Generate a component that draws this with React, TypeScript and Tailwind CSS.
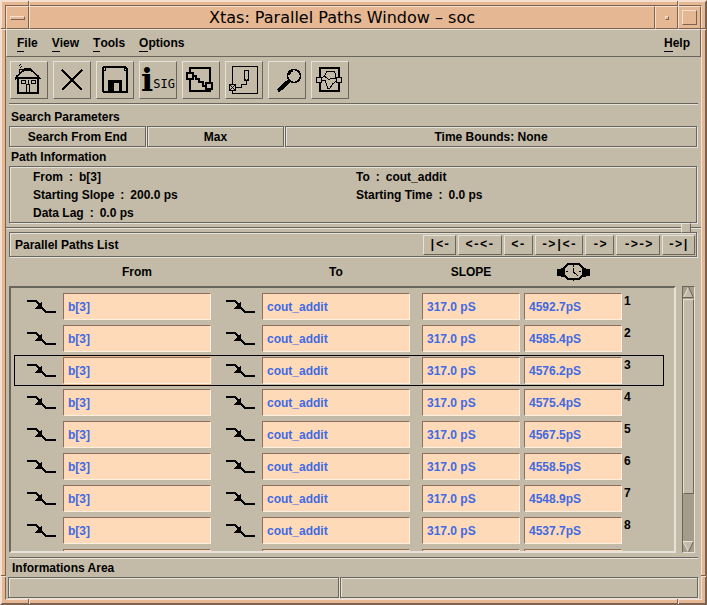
import React from "react";

const FROM = "b[3]";
const TO = "cout_addit";
const DELAYS = ["4592.7pS", "4585.4pS", "4576.2pS", "4575.4pS", "4567.5pS", "4558.5pS", "4548.9pS", "4537.7pS", "4530.1pS"];
const SELECTED = 2;
const NUMBERED_ROWS = 8;

const INFO = [
  ["From", "b[3]"],
  ["To", "cout_addit"],
  ["Starting Slope", "200.0 ps"],
  ["Starting Time", "0.0 ps"],
  ["Data Lag", "0.0 ps"],
];

const ETCHED =
  "border border-[#6b665b] shadow-[1px_1px_0_#e6e2da,inset_1px_1px_0_#e6e2da]";
const RAISED =
  "border border-t-[#e6e2da] border-l-[#e6e2da] border-r-[#6b665b] border-b-[#6b665b]";
const FRAME_CELL =
  "border border-t-[#f5dfd0] border-l-[#f5dfd0] border-r-[#7e6250] border-b-[#7e6250]";
const ROW_GRID = "grid grid-cols-[48px_1fr_51px_1fr_12px_98px_4px_98px_41px]";

function Glyph({ children }: { children: React.ReactNode }) {
  return (
    <svg width="36" height="36" viewBox="0 0 36 36" fill="none" stroke="#000" shapeRendering="crispEdges" aria-hidden="true">
      {children}
    </svg>
  );
}

const TOOLS: { label: string; icon: React.ReactNode }[] = [
  {
    label: "Home",
    icon: (
      <Glyph>
        <path d="M4 17.5 L6 14 L12 9 L14 7 H19 L21 9 L27 14 L29.5 17.5" strokeWidth="1.5" />
        <path d="M13 6.5 h7 v2 h-7z" fill="#000" stroke="none" />
        <path d="M8.5 13 V7.5 H11.5 V10" />
        <path d="M9 5h1v1h-1z M10 4h1v1h-1z M8 3h1v1h-1z M9 2h1v1h-1z" fill="#000" stroke="none" />
        <path d="M5 15.5 H28 M7 16 V31 H27 V16" strokeWidth="2" />
        <path d="M10.5 18.5 h4 v3 h-4z M20.5 18.5 h4 v3 h-4z M15.5 31 V22.5 H18.5 V31" />
        <path d="M17.5 22 v-4" />
      </Glyph>
    ),
  },
  {
    label: "Close",
    icon: (
      <Glyph>
        <path d="M8 8 L28 28 M28 8 L8 28" strokeWidth="2" />
      </Glyph>
    ),
  },
  {
    label: "Save",
    icon: (
      <Glyph>
        <path d="M7 5 H28 L30 7 V30 H7 L6 29 V6z" strokeWidth="2" />
        <path d="M8.5 5 v3 M27.5 5 v3 M7 8.5 h2 M27 8.5 h2" />
        <path d="M11 18 H25 V31 H11z M17 21 V29 H22 V21z" fill="#000" fillRule="evenodd" stroke="none" />
      </Glyph>
    ),
  },
  {
    label: "Signal information",
    icon: (
      <span className="flex h-9 items-end justify-center font-['DejaVu_Serif',serif] text-[32px] leading-[36px] font-bold">
        i<span className="pb-[6px] font-['DejaVu_Sans_Mono',monospace] text-xs leading-[16px] font-normal">SIG</span>
      </span>
    ),
  },
  {
    label: "Path",
    icon: (
      <Glyph>
        <path d="M7 11 V6 H27 V22 M7 17 V29 H27 V27" strokeWidth="2" />
        <path d="M4 11 h6 v6 h-6z M23 21 h6 v6 h-6z" strokeWidth="2" />
        <path d="M10 14 H13 V17 H16 V20 H20 V24 H23" strokeWidth="2" />
      </Glyph>
    ),
  },
  {
    label: "Path end",
    icon: (
      <Glyph>
        <path d="M6.5 22 V4.5 H31.5 V31.5 H6.5 V28" />
        <path d="M3.5 22.5 h6 v6 h-6z M4 23 l5 5 M9 23 l-5 5" />
        <path d="M10 25.5 H15.5 V22.5 H20.5 V18 M18.5 8.5 h4 v10 h-4z M19 17 l1.500 2 l1.500 -2" />
      </Glyph>
    ),
  },
  {
    label: "Search",
    icon: (
      <Glyph>
        <circle cx="25" cy="14" r="6.500" strokeWidth="1.5" />
        <path d="M20.500 13 q0.500 -3 3.500 -4" />
        <path d="M9 29 L20 19" strokeWidth="4" />
      </Glyph>
    ),
  },
  {
    label: "Parallel paths",
    icon: (
      <Glyph>
        <path d="M8 15 V6 H27 V15 M8 20 V29 H27 V20" strokeWidth="2" />
        <path d="M4.500 15.500 h5 v5 h-5z M24.500 15.500 h5 v5 h-5z" />
        <path d="M10 15.500 L12.500 14 L14.500 10 L22 9.500 L24 13 L23.500 16 M10 18.500 L13.500 19 L15.500 26 L18 26 L20.500 22 L24 19.500 M13 14.500 L17 17.500 L21 16 L24 17" />
      </Glyph>
    ),
  },
];

const STEPS = [
  { text: "|<-", width: "w-[33px]" },
  { text: "<-<-", width: "w-[44px]" },
  { text: "<-", width: "w-[29px]" },
  { text: "->|<-", width: "w-[48px]" },
  { text: "->", width: "w-[29px]" },
  { text: "->->", width: "w-[44px]" },
  { text: "->|", width: "w-[33px]" },
];

function FallingEdge() {
  return (
    <svg className="mt-[7px]" width="29" height="14" viewBox="0 0 29 14" fill="none" stroke="#000" shapeRendering="crispEdges" aria-hidden="true">
      <path d="M0 1 H9 L19 12 H29" strokeWidth="2" />
      <path d="M15 1 V9 H8 L10 6z" fill="#000" stroke="none" />
    </svg>
  );
}

function Watch() {
  return (
    <svg width="33" height="18" viewBox="0 0 33 18" fill="none" stroke="#000" shapeRendering="crispEdges" role="img" aria-label="Delay">
      <path d="M0 6 h4 v-1 h3 v9 h-3 v-1 h-4z M33 6 h-4 v-1 h-3 v9 h3 v-1 h4z" fill="#000" stroke="none" />
      <path d="M11 1 H22 L26 5 V12 L22 16 H11 L7 12 V5z" strokeWidth="2" fill="#c3bba8" />
      <path d="M16.500 2 v2 M9 8.500 h2 M22 8.500 h2 M16.500 15 v3 M16.500 5 V9 L21 13" />
    </svg>
  );
}

function MenuItem({ text }: { text: string }) {
  return (
    <button type="button" className="flex text-xs leading-4 font-bold">
      <span className="border-b border-black">{text[0]}</span>
      {text.slice(1)}
    </button>
  );
}

function Field({ value, label, active = false }: { value: string; label: string; active?: boolean }) {
  return (
    <input
      readOnly
      value={value}
      aria-label={label}
      className={`block h-[27px] w-full min-w-0 border border-t-[#8c6f5c] border-r-[#fff0e2] border-b-[#fff0e2] border-l-[#8c6f5c] bg-[#ffdab9] px-1 text-xs font-bold text-[#4169e1] outline-none ${active ? "ring-1 ring-[#e6b793]" : ""}`}
    />
  );
}

function TitleBar() {
  return (
    <header className="flex h-[23px] shrink-0">
      <button type="button" aria-label="Window menu" className={`flex w-[23px] items-center justify-center ${FRAME_CELL}`}>
        <span className={`h-1 w-[15px] ${FRAME_CELL}`} />
      </button>
      <h1 className={`flex flex-1 items-center justify-center font-['DejaVu_Sans',sans-serif] text-base leading-none ${FRAME_CELL}`}>
        Xtas: Parallel Paths Window – soc
      </h1>
      <button type="button" aria-label="Minimize" className={`flex w-[23px] items-center justify-center ${FRAME_CELL}`}>
        <span className={`size-1 ${FRAME_CELL}`} />
      </button>
      <button type="button" aria-label="Maximize" className={`flex w-[23px] items-center justify-center ${FRAME_CELL}`}>
        <span className={`size-[15px] ${FRAME_CELL}`} />
      </button>
    </header>
  );
}

function FrameNotches() {
  const across = "absolute h-[2px] w-[5px] border-t border-t-[#7e6250] border-b border-b-[#f5dfd0]";
  const down = "absolute w-[2px] h-[5px] border-l border-l-[#7e6250] border-r border-r-[#f5dfd0]";
  return (
    <div aria-hidden="true">
      <span className={`${across} top-[26px] -left-px`} />
      <span className={`${across} top-[26px] -right-px`} />
      <span className={`${across} bottom-[26px] -left-px`} />
      <span className={`${across} -right-px bottom-[26px]`} />
      <span className={`${down} -top-px left-[26px]`} />
      <span className={`${down} -top-px right-[26px]`} />
      <span className={`${down} -bottom-px left-[26px]`} />
      <span className={`${down} right-[26px] -bottom-px`} />
    </div>
  );
}

function Rule() {
  return <div className="mr-[3px] ml-[3px] h-[2px] shrink-0 border-t border-b border-t-[#6b665b] border-b-[#e6e2da]" />;
}

function PathsTable() {
  return (
    <table className="flex min-h-0 flex-1 flex-col">
      <thead className="block shrink-0">
        <tr className={`h-7 items-center pr-[13px] pl-[6px] text-xs font-bold ${ROW_GRID}`}>
          <th className="col-start-2">From</th>
          <th className="col-start-4">To</th>
          <th className="col-start-6">SLOPE</th>
          <th className="col-start-8 flex justify-center"><Watch /></th>
        </tr>
      </thead>
      <tbody className="block min-h-0 flex-1 overflow-hidden border-2 border-t-[#6b665b] border-r-[#e6e2da] border-b-[#e6e2da] border-l-[#6b665b] pt-[3px] pr-[10px] pl-[3px]">
        {DELAYS.map((delay, i) => (
          <tr
            key={delay}
            className={`mb-px h-[31px] border py-px ${ROW_GRID} ${i === SELECTED ? "border-black" : "border-transparent"}`}
          >
            <td className="flex justify-end pr-[7px]"><FallingEdge /></td>
            <td><Field value={FROM} label={`From ${i + 1}`} active={i === SELECTED} /></td>
            <td className="flex justify-end pr-[7px]"><FallingEdge /></td>
            <td><Field value={TO} label={`To ${i + 1}`} /></td>
            <td />
            <td><Field value="317.0 pS" label={`Slope ${i + 1}`} /></td>
            <td />
            <td><Field value={delay} label={`Delay ${i + 1}`} /></td>
            <td className="pl-[2px] text-xs leading-4 font-bold">{i < NUMBERED_ROWS ? i + 1 : null}</td>
          </tr>
        ))}
      </tbody>
    </table>
  );
}

function ScrollBar() {
  return (
    <div className="mt-7 ml-[6px] flex w-[13px] flex-col border border-t-[#6b665b] border-r-[#e6e2da] border-b-[#e6e2da] border-l-[#6b665b] bg-[#a59d8a]">
      <button type="button" aria-label="Scroll up">
        <svg width="11" height="11" viewBox="0 0 11 11" className="block" aria-hidden="true">
          <path d="M5.500 0 L11 11 H0z" fill="#c3bba8" />
          <path d="M5.500 0 L0.500 10.500" stroke="#e6e2da" />
          <path d="M5.500 0 L10.500 10.500 H0" stroke="#6b665b" fill="none" />
        </svg>
      </button>
      <div className="flex flex-1 flex-col py-px">
        <div className={`basis-[81%] bg-[#c3bba8] ${RAISED}`} />
      </div>
      <button type="button" aria-label="Scroll down">
        <svg width="11" height="11" viewBox="0 0 11 11" className="block" aria-hidden="true">
          <path d="M5.500 11 L11 0 H0z" fill="#c3bba8" />
          <path d="M11 0.500 H0 L5.500 11" stroke="#e6e2da" fill="none" />
          <path d="M5.500 11 L10.500 0.500" stroke="#6b665b" />
        </svg>
      </button>
    </div>
  );
}

export default function App() {
  return (
    <div className="relative flex h-screen flex-col border-2 border-t-[#f5dfd0] border-r-[#7e6250] border-b-[#7e6250] border-l-[#f5dfd0] bg-[#e6b793] p-[3px] font-['Liberation_Sans',Arial,sans-serif] text-black">
      <div className="flex min-h-0 flex-1 flex-col border border-t-[#7e6250] border-r-[#f5dfd0] border-b-[#f5dfd0] border-l-[#7e6250]">
        <TitleBar />
        <main className="flex min-h-0 flex-1 flex-col bg-[#c3bba8]">
          <nav className={`flex h-7 shrink-0 items-center gap-[14px] pr-[10px] pl-[10px] ${RAISED}`}>
            <MenuItem text="File" />
            <MenuItem text="View" />
            <MenuItem text="Tools" />
            <MenuItem text="Options" />
            <div className="ml-auto"><MenuItem text="Help" /></div>
          </nav>

          <div className="flex shrink-0 gap-[5px] px-1 py-1" role="toolbar">
            {TOOLS.map((tool) => (
              <button key={tool.label} type="button" aria-label={tool.label} className={`size-[38px] ${RAISED}`}>
                {tool.icon}
              </button>
            ))}
          </div>
          <Rule />

          <section className="shrink-0 pr-1 pl-[3px] text-xs font-bold">
            <h2 className="pt-1 pl-[2px] leading-[17px]">Search Parameters</h2>
            <div className="flex gap-px text-center leading-5">
              <div className={`h-[21px] w-[137px] ${ETCHED}`}>Search From End</div>
              <div className={`h-[21px] w-[137px] ${ETCHED}`}>Max</div>
              <div className={`h-[21px] flex-1 ${ETCHED}`}>Time Bounds: None</div>
            </div>
            <h2 className="pt-[2px] pl-[2px] leading-[17px]">Path Information</h2>
            <div className={`grid h-[57px] grid-cols-[323px_1fr] pt-px pl-[23px] leading-[18px] ${ETCHED}`}>
              {INFO.map(([name, value]) => (
                <p key={name} className="flex gap-[6px]">
                  <span>{name}</span>
                  <span>:</span>
                  <span>{value}</span>
                </p>
              ))}
            </div>
          </section>

          <div className="relative mt-1 h-[2px] shrink-0 border-t border-b border-t-[#6b665b] border-b-[#e6e2da]">
            <div className={`absolute right-[10px] -top-[5px] z-10 size-[10px] bg-[#c3bba8] ${RAISED}`} />
          </div>

          <section className="mt-[3px] flex min-h-0 flex-1 flex-col pr-1 pl-[3px]">
            <div className={`flex h-[25px] shrink-0 items-center gap-[2px] pr-px pl-[5px] ${ETCHED}`}>
              <h2 className="mr-auto text-xs font-bold">Parallel Paths List</h2>
              {STEPS.map((step) => (
                <button
                  key={step.text}
                  type="button"
                  className={`h-5 shrink-0 text-center font-['Liberation_Mono',monospace] text-xs leading-none font-bold ${step.width} ${RAISED}`}
                >
                  {step.text}
                </button>
              ))}
            </div>
            <div className="mt-px flex min-h-0 flex-1 pr-[2px]">
              <PathsTable />
              <ScrollBar />
            </div>
          </section>

          <div className="h-1 shrink-0" />
          <Rule />
          <footer className="shrink-0 pr-[3px] pb-px pl-[2px]">
            <h2 className="pl-1 text-xs leading-[18px] font-bold">Informations Area</h2>
            <div className="flex gap-px">
              <div className={`h-[21px] w-[331px] ${ETCHED}`} />
              <div className={`h-[21px] flex-1 ${ETCHED}`} />
            </div>
          </footer>
        </main>
      </div>
      <FrameNotches />
    </div>
  );
}
